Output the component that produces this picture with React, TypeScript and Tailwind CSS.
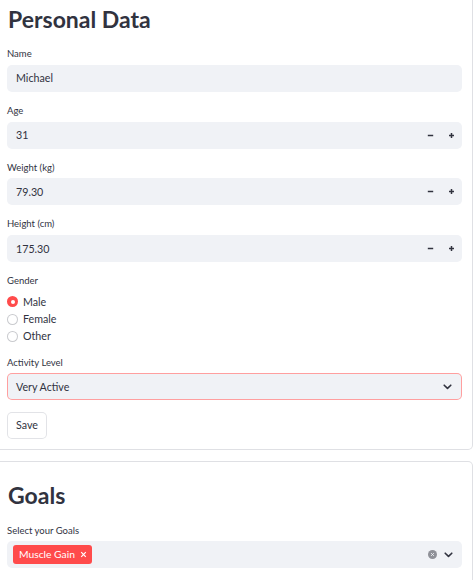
import React from "react";

const font = { fontFamily: "Lato, 'Open Sans', sans-serif" };

function Label({ children }: { children: React.ReactNode }) {
  return (
    <div className="h-[21px] flex items-center text-[9.5px] text-[#31333f]">{children}</div>
  );
}

function Chevron() {
  return (
    <svg width="9" height="6" viewBox="0 0 9 6" fill="none">
      <path d="M1.2 1.2 L4.5 4.4 L7.8 1.2" stroke="#31333f" strokeWidth="1.6" strokeLinecap="round" strokeLinejoin="round" />
    </svg>
  );
}

function NumberField({ label, value }: { label: string; value: string }) {
  return (
    <div className="mb-[8.7px]">
      <Label>{label}</Label>
      <div className="h-[27px] bg-[#f0f2f6] rounded-[5px] flex items-center">
        <div className="flex-1 pl-[9px] text-[10.7px] text-[#31333f]">{value}</div>
        <div className="w-[21px] h-full flex items-center justify-center">
          <svg width="7" height="7" viewBox="0 0 7 7">
            <path d="M0.8 3.5 H6.2" stroke="#31333f" strokeWidth="1.5" />
          </svg>
        </div>
        <div className="w-[21px] h-full flex items-center justify-center">
          <svg width="7" height="7" viewBox="0 0 7 7">
            <path d="M1 3.5 H6 M3.5 1 V6" stroke="#31333f" strokeWidth="1.5" />
          </svg>
        </div>
      </div>
    </div>
  );
}

function Radio({ label, checked }: { label: string; checked?: boolean }) {
  return (
    <div className="h-[17.3px] flex items-center gap-[5px]">
      {checked ? (
        <div className="w-[11px] h-[11px] rounded-full bg-[#ff4b4b] flex items-center justify-center">
          <div className="w-[4px] h-[4px] rounded-full bg-white" />
        </div>
      ) : (
        <div className="w-[11px] h-[11px] rounded-full bg-[#c9cace] p-[1px]">
          <div className="w-full h-full rounded-full bg-white" />
        </div>
      )}
      <span className="text-[10.7px] text-[#31333f]">{label}</span>
    </div>
  );
}

function Card({ children, className }: { children: React.ReactNode; className: string }) {
  return (
    <div className={className}>
      <div className="h-full rounded-[4px] bg-white">{children}</div>
    </div>
  );
}

export default function App() {
  return (
    <div className="w-[476px] h-[580px] overflow-hidden bg-white" style={font}>
      <Card className="ml-[-4px] mt-[-15px] w-[477px] rounded-[5px] bg-[#dfe0e4] p-[1px]">
        <div className="px-[10px] pt-[16px] pb-[10px]">
          <div className="h-[42px] leading-[34px] text-[23px] font-bold text-[#31333f] pl-[1px]">Personal Data</div>

          <div className="mb-[8.7px]">
            <Label>Name</Label>
            <div className="h-[27px] bg-[#f0f2f6] rounded-[5px] flex items-center pl-[9px] text-[10.7px] text-[#31333f]">
              Michael
            </div>
          </div>

          <NumberField label="Age" value="31" />
          <NumberField label="Weight (kg)" value="79.30" />
          <NumberField label="Height (cm)" value="175.30" />

          <div className="mb-[7.2px]">
            <Label>Gender</Label>
            <div className="pt-[1.5px]">
              <Radio label="Male" checked />
              <Radio label="Female" />
              <Radio label="Other" />
            </div>
          </div>

          <div>
            <Label>Activity Level</Label>
            <div className="h-[27px] rounded-[5px] bg-[#ff9f9f] p-[1px]">
              <div className="h-full rounded-[4px] bg-[#f0f2f6] flex items-center pl-[8px] pr-[9px]">
                <span className="flex-1 text-[10.7px] text-[#31333f]">Very Active</span>
                <Chevron />
              </div>
            </div>
          </div>

          <div className="mt-[11.4px] h-[27px] w-[40px] rounded-[5px] bg-[#e2e3e7] p-[1px]">
            <div className="h-full rounded-[4px] bg-white flex items-center justify-center">
              <span className="text-[10.7px] text-[#31333f]">Save</span>
            </div>
          </div>
        </div>
      </Card>

      <Card className="ml-[-4px] mt-[11px] w-[477px] h-[200px] rounded-[5px] bg-[#dfe0e4] p-[1px]">
        <div className="px-[10px] pt-[16.6px]">
          <div className="h-[42px] leading-[34px] text-[23px] font-bold text-[#31333f] pl-[1px]">Goals</div>
          <Label>Select your Goals</Label>
          <div className="h-[27px] bg-[#f0f2f6] rounded-[5px] flex items-center pl-[6px] pr-[9px]">
            <div className="h-[19px] bg-[#ff4b4b] rounded-[3px] flex items-center pl-[6px] pr-[5px] gap-[5px] text-[10.3px] text-white">
              <span>Muscle Gain</span>
              <svg width="7" height="7" viewBox="0 0 7 7">
                <path d="M1.2 1.2 L5.8 5.8 M5.8 1.2 L1.2 5.8" stroke="white" strokeWidth="1.2" />
              </svg>
            </div>
            <div className="flex-1" />
            <div className="w-[9px] h-[9px] rounded-full bg-[#8f9198] flex items-center justify-center mr-[7px]">
              <svg width="5" height="5" viewBox="0 0 5 5">
                <path d="M1.2 1.2 L3.8 3.8 M3.8 1.2 L1.2 3.8" stroke="#f0f2f6" strokeWidth="1" />
              </svg>
            </div>
            <Chevron />
          </div>
        </div>
      </Card>
    </div>
  );
}
